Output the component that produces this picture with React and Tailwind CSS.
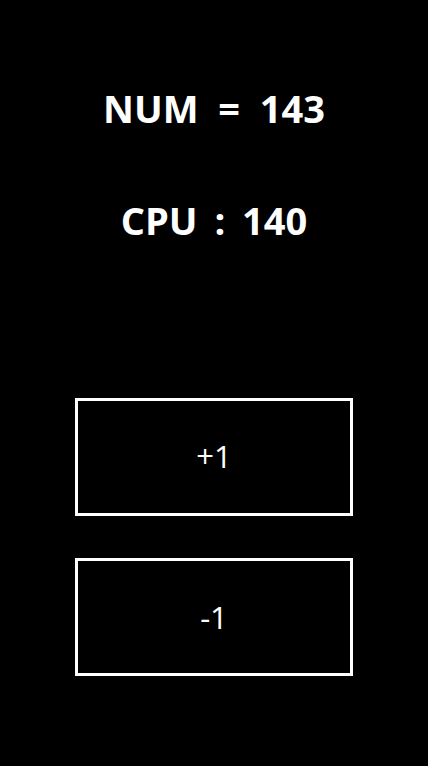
import React, { useState } from 'react';

const App = () => {
  const [num, setNum] = useState(143);
  const cpu = 140;

  return (
    <div className="min-h-[766px] w-full bg-black text-white font-['Open_Sans',sans-serif] flex flex-col items-center">
      {/* Scores */}
      <div className="text-[38px] font-bold leading-none pt-[89px] whitespace-pre">NUM  =  {num}</div>
      <div className="text-[38px] font-bold leading-none mt-[74px] whitespace-pre">
        CPU <span className="mx-[7px]">:</span> {cpu}
      </div>

      {/* Buttons */}
      <div className="flex flex-col gap-[42px] mt-[159px]">
        <button
          onClick={() => setNum(num + 1)}
          className="w-[278px] h-[118px] border-[3px] border-white flex items-center justify-center text-[31px] pb-[2px]"
        >
          +1
        </button>
        <button
          onClick={() => setNum(num - 1)}
          className="w-[278px] h-[118px] border-[3px] border-white flex items-center justify-center text-[31px]"
        >
          -1
        </button>
      </div>
    </div>
  );
};

export default App;
